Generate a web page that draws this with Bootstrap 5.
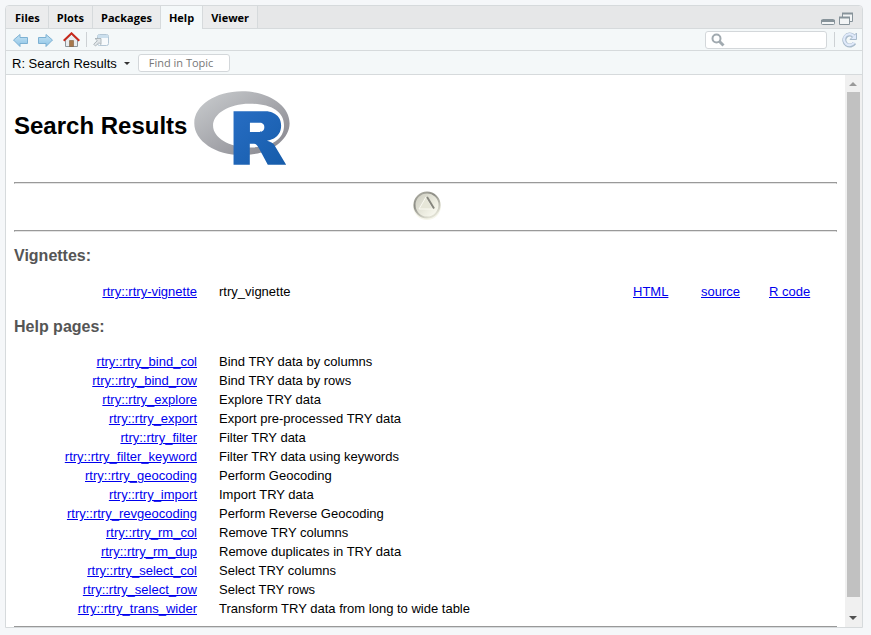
<!DOCTYPE html>
<html lang="en">
<head>
<meta charset="utf-8">
<meta name="viewport" content="width=device-width, initial-scale=1">
<title>R: Search Results</title>
<link href="https://cdn.jsdelivr.net/npm/bootstrap@5.3.0/dist/css/bootstrap.min.css" rel="stylesheet">
<style>
body{background:#f5f7f9;color:#000;font:13px/19px "Liberation Sans",Arial,sans-serif;padding:5px 8px 7px 5px}
.pane{border:1px solid #d6dadc;border-radius:4px 4px 0 0;background:#fff}
.tabs{background:#e6e7e8;border-bottom:1px solid #d6dadc;height:23px;font:bold 11px/24px "Open Sans",sans-serif}
.tabs .nav-link{padding:0 8px;height:22px;color:#000;background:#ebeced;border-right:1px solid #d6dadc}
.tabs .nav-link:first-child{padding-left:9px}
.tabs .nav-link.active{background:#f4f8f9;height:23px}
.tools{background:#f4f8f9;border-bottom:1px solid #d6dadc;height:22px}
.topic{background:#f4f8f9;border-bottom:1px solid #d6dadc;height:24px}
.plain{border:0;background:none;padding:0;display:flex;color:#000}
.title-btn{font-size:13px;line-height:22px;gap:7px;padding:2px 0 0 6px}
.sep{width:1px;height:15px;background:#cdd1d4}
.icons{gap:7px}
.nav-icons{gap:6px;padding-left:7px}
.field{font:11px/16px "Open Sans",sans-serif;height:18px;border:1px solid #d3d7da;border-radius:3px;background:#fff;padding:0 10px}
.field::placeholder{color:#777;opacity:1}
.find{width:92px}
.search{width:122px;padding:0 5px}
.search input{border:0;outline:0;background:none;min-width:0;padding:0}
.doc{padding:13px 8px 0}
.doc h1{font-size:24px;line-height:28px;font-weight:bold;gap:7px}
.doc h1 span{padding-bottom:2px}
.doc h3{font-size:16px;line-height:18px;font-weight:bold;color:#555;margin:15px 0 17px}
.doc .vignettes + h3{margin:17px 0 16px}
.up{padding:6px 0 10px}
.rule{height:2px;border:1px solid #999;border-bottom-color:#e4e4e4;opacity:1;margin:0}
.doc a{color:#00e}
.results{width:100%}
.results td{padding:0;height:19px}
.results .topic-cell{width:183px;text-align:right}
.results .desc{padding-left:22px}
.results .fmt{width:68px}
.track{width:17px;background:#f0f0f0;padding:0 2px}
.arrow{height:17px}
.thumb{background:#c1c1c1;flex:505 1 0}
.rest{flex:13 1 0}
</style>
<script src="https://cdn.jsdelivr.net/npm/bootstrap@5.3.0/dist/js/bootstrap.bundle.min.js"></script>
</head>
<body class="vh-100 overflow-hidden">
<div class="pane d-flex flex-column h-100 overflow-hidden">
  <header class="tabs d-flex flex-shrink-0">
    <nav class="nav flex-nowrap" aria-label="Panes">
      <a class="nav-link" href="#files">Files</a>
      <a class="nav-link" href="#plots">Plots</a>
      <a class="nav-link" href="#packages">Packages</a>
      <a class="nav-link active" href="#help" aria-current="page">Help</a>
      <a class="nav-link" href="#viewer">Viewer</a>
    </nav>
    <div class="d-flex ms-auto gap-1 pe-2 pt-1">
      <button class="plain" aria-label="Minimize"><svg width="15" height="16"><rect x="1.5" y="9.500" width="13" height="5" rx="1" fill="#f2f4f5" stroke="#87939a"/><path d="M1 10h14v2H1z" fill="#87939a"/></svg></button>
      <button class="plain" aria-label="Maximize"><svg width="15" height="16" fill="#f2f4f5" stroke="#87939a"><path d="M3.500 3.500h10v8h-10z"/><path d="M3 3.500h11" stroke-width="2"/><path d="M.5 7.500h10v7H.5z"/><path d="M0 7.500h11" stroke-width="2"/></svg></button>
    </div>
  </header>
  <div class="tools d-flex flex-shrink-0 align-items-center pe-1">
    <div class="nav-icons d-flex align-items-center">
      <button class="plain" aria-label="Back"><svg width="15" height="14"><defs><linearGradient id="ar" x2="0" y2="1"><stop stop-color="#c5e4f5"/><stop offset="1" stop-color="#8dc3e5"/></linearGradient></defs><path d="M.5 7 7 1.500v3h7.500v6H7v3z" fill="url(#ar)" stroke="#7db1d3"/></svg></button>
      <button class="plain ms-1" aria-label="Forward"><svg width="15" height="14"><path d="M14.500 7 8 1.500v3H.5v6H8v3z" fill="url(#ar)" stroke="#7db1d3"/></svg></button>
      <button class="plain ms-1" aria-label="Home"><svg width="17" height="16"><path d="M2.500 8v6.500h12V8l-6-6z" fill="#e8ecef" stroke="#8d979d"/><path d="M6.500 8.500h4v6h-4z" fill="#a8784c" stroke="#80603f" stroke-width=".6"/><path d="M.7 8.700 8.500 1.300l7.800 7.400" fill="none" stroke="#c8291c" stroke-width="2"/></svg></button>
      <span class="sep"></span>
      <button class="plain" aria-label="Show in new window"><svg width="17" height="14"><rect x="4.500" y="1.500" width="11" height="11" rx="2" fill="#f7fafc" stroke="#b3c6d5"/><path d="M5 2h10v3H5z" fill="#cbdfed"/><path d="M2 5.500h6v6L6 9.700 2.500 13 .7 11.200 4.300 7.700z" fill="#e0e5e8" stroke="#a0a9af" stroke-width=".8"/></svg></button>
    </div>
    <div class="icons d-flex align-items-center ms-auto">
      <label class="field search d-flex align-items-center gap-1"><svg class="flex-shrink-0" width="14" height="14" fill="none" stroke="#a1aab0"><circle cx="5.500" cy="5.500" r="4" stroke-width="2"/><path d="m8.500 8.500 4 4" stroke-width="3"/></svg><input class="w-100" type="text" aria-label="Search help"></label>
      <span class="sep"></span>
      <button class="plain" aria-label="Refresh"><svg width="16" height="16" fill="none"><path d="M11.500 4A5.500 5.500 0 1 0 12.500 11" stroke="#a9bbcb" stroke-width="4"/><path d="M14.500 1v6.500H8z" fill="#dfe9fa" stroke="#a9bbcb"/><path d="M12 4.300A5.500 5.500 0 1 0 12.200 10.500" stroke="#dfe9fa" stroke-width="2.200"/></svg></button>
    </div>
  </div>
  <div class="topic d-flex flex-shrink-0 align-items-center">
    <button class="plain title-btn align-items-center">R: Search Results <svg width="6" height="3"><path d="M0 0h6L3 3z" fill="#333"/></svg></button>
    <input class="field find ms-2" type="text" placeholder="Find in Topic" aria-label="Find in Topic">
  </div>
  <div class="d-flex flex-grow-1 overflow-hidden">
    <main class="doc flex-grow-1 overflow-hidden">
      <h1 class="d-flex align-items-center mb-3"><span>Search Results</span>
        <svg width="96" height="78" viewBox="0 -22 724 590" role="img" aria-label="R logo"><defs><linearGradient id="g1" x2="1" y2="1"><stop stop-color="#cbced0"/><stop offset="1" stop-color="#84838b"/></linearGradient><linearGradient id="g2" x2="1" y2="1"><stop stop-color="#276dc3"/><stop offset="1" stop-color="#165caa"/></linearGradient></defs><path fill="url(#g1)" fill-rule="evenodd" d="M361 486C162 486 1 378 1 244S162 3 361 3s361 108 361 241-162 242-361 242zM417 97c-152 0-274 74-274 165s122 166 274 166 263-51 263-166S568 97 417 97z"/><path fill="url(#g2)" fill-rule="evenodd" d="M550 377s22 7 35 13c4 2 12 7 17 13 5 5 8 11 8 11l86 145H557l-65-122s-13-23-21-30c-7-5-10-7-17-7h-33v159H298V153h247s113 2 113 109-108 115-108 115zm-53-136h-75v69h75s34 0 34-35c0-36-34-34-34-34z"/></svg>
      </h1>
      <hr class="rule">
      <div class="up d-flex justify-content-center"><a class="d-flex" href="#top" aria-label="Top"><svg width="30" height="30"><defs><linearGradient id="b1" x2="1" y2="1"><stop stop-color="#c9c9bd"/><stop offset=".6" stop-color="#ecece0"/><stop offset="1" stop-color="#fffff8"/></linearGradient><linearGradient id="b2" x1="0" x2=".6" y2="1"><stop stop-color="#b5b5ab"/><stop offset=".4" stop-color="#8c8c85"/><stop offset="1" stop-color="#e0e0d3"/></linearGradient></defs><circle cx="16" cy="16" r="14" fill="#f6f6ec"/><circle cx="16" cy="15" r="12.500" fill="url(#b1)" stroke="url(#b2)" stroke-width="2"/><path d="M15 7 8 19h14z" fill="#e6e6d8" stroke="#fafaf2"/><path d="m16 7 7 11.500" stroke="#85857d" stroke-width="2"/></svg></a></div>
      <hr class="rule">
      <h3>Vignettes:</h3>
      <table class="results vignettes"><tbody>
        <tr><td class="topic-cell"><a href="#v">rtry::rtry-vignette</a></td><td class="desc">rtry_vignette</td><td class="fmt"><a href="#html">HTML</a></td><td class="fmt"><a href="#source">source</a></td><td class="fmt"><a href="#code">R code</a></td></tr>
      </tbody></table>
      <h3>Help pages:</h3>
      <table class="results mb-2"><tbody>
        <tr><td class="topic-cell"><a href="#1">rtry::rtry_bind_col</a></td><td class="desc">Bind TRY data by columns</td></tr>
        <tr><td class="topic-cell"><a href="#2">rtry::rtry_bind_row</a></td><td class="desc">Bind TRY data by rows</td></tr>
        <tr><td class="topic-cell"><a href="#3">rtry::rtry_explore</a></td><td class="desc">Explore TRY data</td></tr>
        <tr><td class="topic-cell"><a href="#4">rtry::rtry_export</a></td><td class="desc">Export pre-processed TRY data</td></tr>
        <tr><td class="topic-cell"><a href="#5">rtry::rtry_filter</a></td><td class="desc">Filter TRY data</td></tr>
        <tr><td class="topic-cell"><a href="#6">rtry::rtry_filter_keyword</a></td><td class="desc">Filter TRY data using keywords</td></tr>
        <tr><td class="topic-cell"><a href="#7">rtry::rtry_geocoding</a></td><td class="desc">Perform Geocoding</td></tr>
        <tr><td class="topic-cell"><a href="#8">rtry::rtry_import</a></td><td class="desc">Import TRY data</td></tr>
        <tr><td class="topic-cell"><a href="#9">rtry::rtry_revgeocoding</a></td><td class="desc">Perform Reverse Geocoding</td></tr>
        <tr><td class="topic-cell"><a href="#10">rtry::rtry_rm_col</a></td><td class="desc">Remove TRY columns</td></tr>
        <tr><td class="topic-cell"><a href="#11">rtry::rtry_rm_dup</a></td><td class="desc">Remove duplicates in TRY data</td></tr>
        <tr><td class="topic-cell"><a href="#12">rtry::rtry_select_col</a></td><td class="desc">Select TRY columns</td></tr>
        <tr><td class="topic-cell"><a href="#13">rtry::rtry_select_row</a></td><td class="desc">Select TRY rows</td></tr>
        <tr><td class="topic-cell"><a href="#14">rtry::rtry_trans_wider</a></td><td class="desc">Transform TRY data from long to wide table</td></tr>
      </tbody></table>
      <hr class="rule">
    </main>
    <div class="track d-flex flex-column flex-shrink-0" aria-hidden="true">
      <svg class="arrow" width="13" height="17"><path d="M2 11h8L6 7z" fill="#999"/></svg>
      <div class="thumb"></div><div class="rest"></div>
      <svg class="arrow" width="13" height="17"><path d="M2 6h8l-4 4z" fill="#505050"/></svg>
    </div>
  </div>
</div>
</body>
</html>
